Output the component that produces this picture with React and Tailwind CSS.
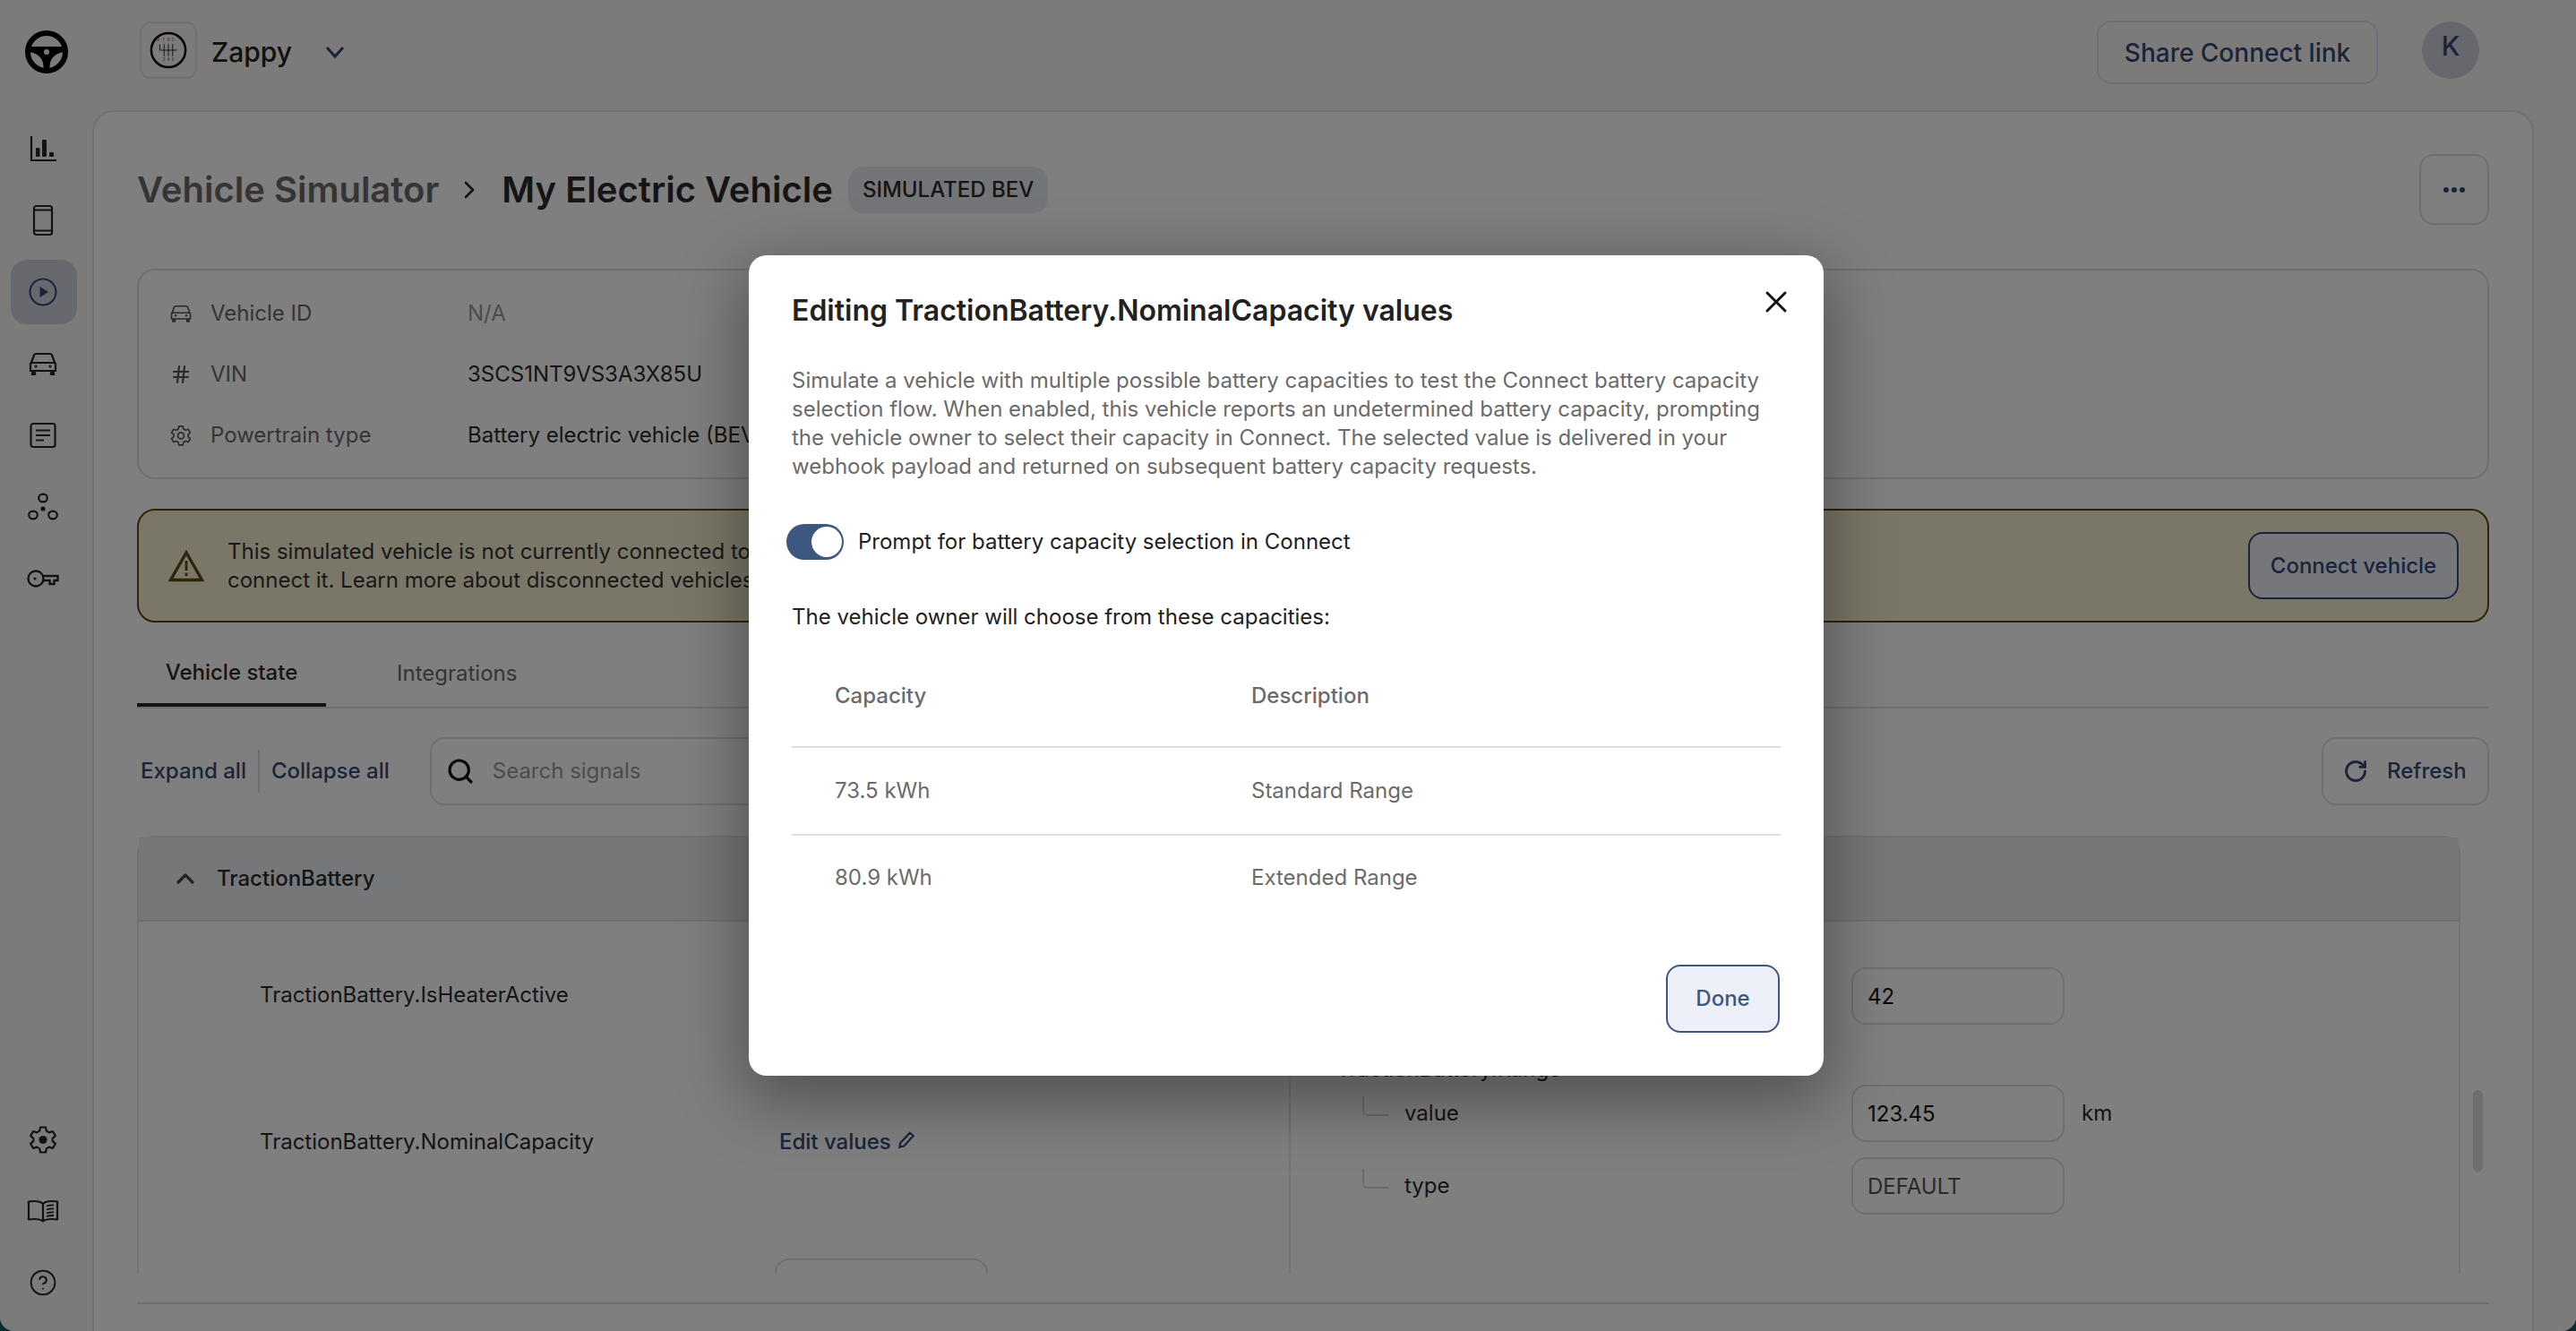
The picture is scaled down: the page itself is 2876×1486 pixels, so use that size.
import React from "react";
import { ChevronRight, ChevronUp, CircleHelp, Hash, RotateCw, Search, X } from "lucide-react";

const navIcon = "w-8 h-8 text-[#262626]";

const Logo = () => (
  <svg viewBox="0 0 48 48" className="w-12 h-12">
    <circle cx="24" cy="24" r="21" fill="none" stroke="#000" strokeWidth="6" />
    <path d="M3 18H45V24C38 24 30 28 28 36L27 45H21L20 36C18 28 10 24 3 24Z" fill="#000" />
    <circle cx="24" cy="24" r="3" fill="#f8f7f2" />
  </svg>
);

const Shifter = () => (
  <svg viewBox="0 0 44 44" className="w-[42px] h-[42px]">
    <circle cx="22" cy="22" r="20" fill="none" stroke="#000" strokeWidth="2.6" />
    <path d="M12 15V22H32M17 15V29M22 15V29M27 15V29" fill="none" stroke="#222" strokeWidth="1" />
    <text x="8.5" y="12" fontSize="4.5" fill="#333" fontFamily="Inter">R</text>
    <text x="15.5" y="12" fontSize="4.5" fill="#333" fontFamily="Inter">1</text>
    <text x="20.5" y="12" fontSize="4.5" fill="#333" fontFamily="Inter">3</text>
    <text x="26" y="12" fontSize="4.5" fill="#333" fontFamily="Inter">5</text>
    <text x="15.5" y="35" fontSize="4.5" fill="#333" fontFamily="Inter">2</text>
    <text x="20.5" y="35" fontSize="4.5" fill="#333" fontFamily="Inter">4</text>
    <text x="26" y="35" fontSize="4.5" fill="#333" fontFamily="Inter">6</text>
  </svg>
);

const ChartIcon = () => (
  <svg viewBox="0 0 32 32" className={navIcon} fill="none" stroke="currentColor" strokeWidth="2.2">
    <path d="M3 2V29H31" />
    <rect x="8" y="15" width="4.5" height="10" rx="1" fill="currentColor" stroke="none" />
    <rect x="15" y="6" width="5" height="19" rx="1" fill="currentColor" stroke="none" />
    <rect x="23" y="20" width="5" height="5" rx="1" fill="currentColor" stroke="none" />
  </svg>
);

const PhoneIcon = () => (
  <svg viewBox="0 0 32 36" className="w-8 h-9 text-[#262626]" fill="none" stroke="currentColor" strokeWidth="2.2">
    <rect x="6" y="2" width="20" height="32" rx="2.5" />
    <path d="M6 6.5H26M6 29.5H26" />
  </svg>
);

const PlayIcon = () => (
  <svg viewBox="0 0 32 32" className="w-8 h-8 text-[#344a78]" fill="none" stroke="currentColor" strokeWidth="2">
    <circle cx="16" cy="16" r="14.5" />
    <path d="M12.5 10L22 16L12.5 22Z" fill="currentColor" stroke="none" />
  </svg>
);

const CarIcon = ({ className }) => (
  <svg viewBox="0 0 32 26" className={className} fill="none" stroke="currentColor" strokeWidth="2.2">
    <path d="M2.5 13L6 3.5C6.4 2.4 7.2 2 8.2 2H23.8C24.8 2 25.6 2.4 26 3.5L29.5 13" />
    <path d="M2 13.5C2 12.5 2.8 12 3.5 12H28.5C29.2 12 30 12.5 30 13.5V21H2Z" />
    <path d="M4 21V25H7V21M25 21V25H28V21" fill="currentColor" />
    <circle cx="8" cy="16" r="1.6" fill="currentColor" stroke="none" />
    <circle cx="24" cy="16" r="1.6" fill="currentColor" stroke="none" />
  </svg>
);

const DocIcon = () => (
  <svg viewBox="0 0 32 32" className={navIcon} fill="none" stroke="currentColor" strokeWidth="2.2">
    <rect x="2.5" y="3" width="27" height="26" rx="2.5" />
    <path d="M8 10.5H24M8 16H24M8 21.5H17" />
  </svg>
);

const NodesIcon = () => (
  <svg viewBox="0 0 34 32" className="w-[34px] h-8 text-[#262626]" fill="none" stroke="currentColor" strokeWidth="2.2">
    <ellipse cx="17" cy="6" rx="4.8" ry="4.4" />
    <ellipse cx="6" cy="25" rx="4.8" ry="4.4" />
    <ellipse cx="28" cy="25" rx="4.8" ry="4.4" />
    <circle cx="17" cy="18" r="2.6" fill="currentColor" stroke="none" />
  </svg>
);

const KeyIcon = () => (
  <svg viewBox="0 0 36 22" className="w-9 h-[22px] text-[#262626]" fill="none" stroke="currentColor" strokeWidth="2.4">
    <circle cx="10" cy="11" r="8.5" />
    <circle cx="9" cy="11" r="1.6" fill="currentColor" stroke="none" />
    <path d="M18.5 8H34.5V13H30.5V17H25.5V13H18.5" />
  </svg>
);

const GearIcon = ({ filled, className }) => (
  <svg viewBox="0 0 32 32" className={className} fill="none" stroke="currentColor" strokeWidth="2.2" strokeLinejoin="round">
    <path d="M13 2.5H19L19.8 6.6L22.9 8.4L26.9 7L29.9 12.1L26.7 14.9V18.1L29.9 20.9L26.9 26L22.9 24.6L19.8 26.4L19 30.5H13L12.2 26.4L9.1 24.6L5.1 26L2.1 20.9L5.3 18.1V14.9L2.1 12.1L5.1 7L9.1 8.4L12.2 6.6Z" />
    <circle cx="16" cy="16.5" r="4.6" fill={filled ? "currentColor" : "none"} stroke={filled ? "none" : "currentColor"} />
  </svg>
);

const BookIcon = () => (
  <svg viewBox="0 0 36 26" className="w-9 h-[26px] text-[#262626]" fill="none" stroke="currentColor" strokeWidth="2.2" strokeLinejoin="round">
    <path d="M18 5C15 2 9 1.5 2 2.5V22.5C9 21.5 15 22 18 24.5C21 22 27 21.5 34 22.5V2.5C27 1.5 21 2 18 5ZM18 5V24.5" />
    <path d="M22 7.5C24.5 6.7 27 6.4 30 6.4M22 11.5C24.5 10.7 27 10.4 30 10.4M22 15.5C24.5 14.7 27 14.4 30 14.4M22 19C24.5 18.2 27 18 30 18" strokeWidth="1.8" />
  </svg>
);

const WarnIcon = () => (
  <svg viewBox="0 0 40 36" className="w-10 h-9 text-[#5f4710]" fill="none" stroke="currentColor" strokeWidth="3.4">
    <path d="M20 3L37.5 33.5H2.5Z" />
    <path d="M20 12V23M20 25.5V29" strokeWidth="2.8" />
  </svg>
);

const PencilIcon = () => (
  <svg viewBox="0 0 20 20" className="w-[22px] h-[22px] text-[#344a78]" fill="none" stroke="currentColor" strokeWidth="2">
    <path d="M3 17L4 12.5L13.5 2.5L17 5.5L7.5 16Z" />
  </svg>
);

const NavItem = ({ active, children }) => (
  <div className={`flex h-[72px] w-[74px] items-center justify-center pr-[2px] ${active ? "rounded-[18px] bg-[#cfd2dc]" : ""}`}>
    {children}
  </div>
);

const Field = ({ value, gray }) => (
  <input
    readOnly
    value={value}
    className={`w-[238px] h-16 shrink-0 rounded-[16px] border-2 border-[#dedede] px-4 text-2xl ${gray ? "text-[#555]" : "text-[#111]"}`}
  />
);

const Connector = () => (
  <div className="ml-[29px] mt-[13px] mr-[17px] h-[22px] w-[30px] shrink-0 self-start rounded-bl-[6px] border-b-2 border-l-2 border-[#d6d6d6]" />
);

const infoRows = [
  { icon: <CarIcon className="w-6 h-6 text-[#555]" />, label: "Vehicle ID", value: "N/A", valueCls: "text-[#999]" },
  { icon: <Hash className="w-6 h-6 text-[#555]" strokeWidth={2.2} />, label: "VIN", value: "3SCS1NT9VS3A3X85U", valueCls: "text-[#2b2b2b]" },
  { icon: <GearIcon className="w-6 h-6 text-[#555]" />, label: "Powertrain type", value: "Battery electric vehicle (BEV)", valueCls: "text-[#2b2b2b]" },
];

export default function App() {
  return (
    <div className="relative h-screen overflow-hidden bg-[#0b2a2e] font-['Inter',sans-serif] text-[#2b2b2b]">
      <div className="flex h-full overflow-hidden rounded-b-[16px] bg-[#f8f7f2]">
        {/* sidebar */}
        <aside className="flex w-[103px] shrink-0 flex-col pl-3 pb-[18px]">
          <div className="flex h-[130px] items-start pl-4 pt-[34px]">
            <Logo />
          </div>
          <nav className="flex flex-col gap-2">
            <NavItem><ChartIcon /></NavItem>
            <NavItem><PhoneIcon /></NavItem>
            <NavItem active><PlayIcon /></NavItem>
            <NavItem><CarIcon className="w-8 h-[26px] text-[#262626]" /></NavItem>
            <NavItem><DocIcon /></NavItem>
            <NavItem><NodesIcon /></NavItem>
            <NavItem><KeyIcon /></NavItem>
          </nav>
          <div className="mt-auto flex flex-col gap-2">
            <NavItem><GearIcon filled className="w-8 h-8 text-[#262626]" /></NavItem>
            <NavItem><BookIcon /></NavItem>
            <NavItem><CircleHelp className="w-8 h-8 text-[#262626]" strokeWidth={1.5} /></NavItem>
          </div>
        </aside>

        <main className="flex min-w-0 flex-1 flex-col pr-[47px]">
          {/* top bar */}
          <header className="flex h-[123px] shrink-0 pt-6">
            <div className="ml-[53px] flex h-16 w-16 items-center justify-center rounded-[12px] border-2 border-[#dfe0e8]">
              <Shifter />
            </div>
            <span className="ml-4 flex h-[68px] items-center text-[30px] font-medium text-[#222]">Zappy</span>
            <svg viewBox="0 0 22 14" className="ml-[37px] mt-[27px] h-[14px] w-[22px] text-[#344a78]" fill="none" stroke="currentColor" strokeWidth="3.2">
              <path d="M2 2L11 12L20 2" />
            </svg>
            <button className="ml-auto h-[71px] w-[314px] -translate-y-px rounded-[16px] border-2 border-[#dde0ee] text-[28px] font-medium text-[#344a78]">
              Share Connect link
            </button>
            <div className="ml-[49px] mr-[61px] h-16 w-16 rounded-full bg-[#ccd0dc] pt-[5px] text-center text-[30px] font-medium text-[#344a78]">K</div>
          </header>

          {/* panel */}
          <section className="min-h-0 flex-1 rounded-t-[24px] border-2 border-b-0 border-[#e2e2e2] bg-white px-12 pt-[47px]">
            <div className="flex h-[79px] items-center">
              <h1 className="text-[40px] font-semibold text-[#6a6a6a]">Vehicle Simulator</h1>
              <ChevronRight className="ml-[18px] mr-[20px] h-8 w-8 text-[#2b2b2b]" strokeWidth={2} />
              <h1 className="text-[40px] font-semibold text-[#2b2b2b]">My Electric Vehicle</h1>
              <span className="ml-[17px] rounded-[16px] bg-[#e9ebf0] px-4 py-[10px] text-2xl font-medium text-[#2b2b2b]">SIMULATED BEV</span>
              <button className="ml-auto flex h-[79px] w-[78px] items-center justify-center rounded-[16px] border-2 border-[#dedede]">
                <span className="flex gap-[3px]">
                  <i className="h-[6px] w-[6px] rounded-full bg-[#344a78]" />
                  <i className="h-[6px] w-[6px] rounded-full bg-[#344a78]" />
                  <i className="h-[6px] w-[6px] rounded-full bg-[#344a78]" />
                </span>
              </button>
            </div>

            {/* vehicle info */}
            <div className="mt-[49px] flex h-[235px] flex-col gap-9 rounded-[20px] border-2 border-[#dedede] pl-[35px] pt-[32px] text-2xl">
              {infoRows.map((row) => (
                <div key={row.label} className="flex h-8 items-center">
                  {row.icon}
                  <span className="ml-[21px] w-[287px] text-[#6a6a6a]">{row.label}</span>
                  <span className={row.valueCls}>{row.value}</span>
                </div>
              ))}
            </div>

            {/* warning */}
            <div className="mt-[33px] flex h-[127px] items-center rounded-[20px] border-2 border-[#5f4710] bg-[#f6eed0] pl-[33px] pr-8">
              <WarnIcon />
              <p className="ml-[26px] text-2xl text-[#333]">
                This simulated vehicle is not currently connected to
                <br />
                connect it. Learn more about disconnected vehicles
              </p>
              <button className="ml-auto h-[75px] w-[235px] rounded-[16px] border-2 border-[#344a78] bg-[#eceef6] text-2xl font-medium text-[#344a78]">
                Connect vehicle
              </button>
            </div>

            {/* tabs */}
            <div className="mt-[18px] flex border-b-2 border-[#dedede] text-2xl">
              <div className="flex h-[76px] w-[211px] items-center justify-center border-b-4 border-[#2b2b2b] pt-1 font-medium text-[#2b2b2b]">Vehicle state</div>
              <div className="ml-[79px] flex h-[76px] items-center pt-[2px] text-[#6a6a6a]">Integrations</div>
            </div>

            {/* toolbar */}
            <div className="mt-8 flex h-[76px] items-center text-2xl">
              <span className="ml-1 font-medium text-[#344a78]">Expand all</span>
              <span className="mx-[13px] h-12 w-[2px] bg-[#dedede]" />
              <span className="font-medium text-[#344a78]">Collapse all</span>
              <div className="ml-[45px] flex h-[76px] w-[900px] items-center rounded-[16px] border-2 border-[#dedede] pl-4">
                <Search className="h-8 w-8 text-[#111]" strokeWidth={2.4} />
                <input placeholder="Search signals" className="ml-5 flex-1 outline-none placeholder:text-[#999]" />
              </div>
              <button className="ml-auto flex h-[76px] w-[187px] items-center rounded-[16px] border-2 border-[#dedede] pl-[22px] font-medium text-[#344a78]">
                <RotateCw className="h-7 w-7" strokeWidth={2.4} />
                <span className="ml-[21px]">Refresh</span>
              </button>
            </div>

            {/* signals */}
            <div className="relative mt-[34px] h-[489px] overflow-hidden pr-8">
              <div className="rounded-t-[20px] border-2 border-[#e4e4e4]">
                <div className="flex h-[94px] items-center border-b-2 border-[#dedede] bg-[#eceef2] pl-9 text-2xl font-medium text-[#2b2b2b]">
                  <ChevronUp className="h-8 w-8 text-[#444]" strokeWidth={2.4} />
                  <span className="ml-[19px]">TractionBattery</span>
                </div>
                <div className="flex text-2xl">
                  <div className="w-[1284px] shrink-0 text-[#2b2b2b]">
                    <div className="flex h-[164px] items-center pl-[135px]">TractionBattery.IsHeaterActive</div>
                    <div className="flex h-[164px] items-center pl-[135px]">
                      <span className="w-[580px]">TractionBattery.NominalCapacity</span>
                      <span className="font-medium text-[#344a78]">Edit values</span>
                      <span className="ml-[6px] -translate-y-[2px]"><PencilIcon /></span>
                    </div>
                    <div className="ml-[710px] mt-[48px] h-16 w-[238px] rounded-[16px] border-2 border-[#dedede]" />
                  </div>
                  <div className="h-[500px] flex-1 border-l-2 border-[#e4e4e4] pl-[51px] pt-[51px]">
                    <div className="ml-[575px]"><Field value="42" /></div>
                    <div className="mt-[34px] h-8 leading-8">TractionBattery.Range</div>
                    <div className="mt-px flex">
                      <Connector />
                      <span className="flex h-16 w-[499px] items-center">value</span>
                      <Field value="123.45" />
                      <span className="ml-[19px] flex h-16 items-center">km</span>
                    </div>
                    <div className="mt-[17px] flex">
                      <Connector />
                      <span className="flex h-16 w-[499px] items-center">type</span>
                      <Field value="DEFAULT" gray />
                    </div>
                  </div>
                </div>
              </div>
              <div className="absolute right-[7px] top-[284px] h-[91px] w-[11px] rounded-full bg-[#dcdcdc]" />
            </div>
            <div className="mt-8 border-t-2 border-[#dedede]" />
          </section>
        </main>
      </div>

      {/* dialog */}
      <div className="absolute inset-0 flex items-center justify-center rounded-b-[16px] bg-black/50 pr-1">
        <div className="relative h-[916px] w-[1200px] rounded-[20px] bg-white px-12 pt-[43px] shadow-[0_22px_70px_8px_rgba(0,0,0,0.35)]">
          <X className="absolute right-[33px] top-[32px] h-10 w-10 text-[#111]" strokeWidth={1.8} />
          <h2 className="text-[32px] leading-[38px] font-semibold text-[#222]">Editing TractionBattery.NominalCapacity values</h2>
          <p className="mt-[43px] text-2xl text-[#6b6b6b]">
            Simulate a vehicle with multiple possible battery capacities to test the Connect battery capacity
            <br />
            selection flow. When enabled, this vehicle reports an undetermined battery capacity, prompting
            <br />
            the vehicle owner to select their capacity in Connect. The selected value is delivered in your
            <br />
            webhook payload and returned on subsequent battery capacity requests.
          </p>
          <div className="mt-[48px] flex h-10 items-center">
            <div className="-ml-[6px] flex h-10 w-16 items-center justify-end rounded-full bg-[#3e5780] pr-[2px]">
              <div className="h-[34px] w-[34px] rounded-full bg-white" />
            </div>
            <span className="ml-4 text-2xl text-[#222]">Prompt for battery capacity selection in Connect</span>
          </div>
          <p className="mt-[48px] text-2xl text-[#222]">The vehicle owner will choose from these capacities:</p>
          <table className="mt-[23px] w-full table-fixed text-left text-2xl text-[#6b6b6b]">
            <thead>
              <tr className="h-[106px] border-b-2 border-[#e0e0e0]">
                <th className="w-[513px] pb-2 pl-12 font-medium">Capacity</th>
                <th className="pb-2 pl-0 font-medium">Description</th>
              </tr>
            </thead>
            <tbody>
              <tr className="h-[98px] border-b-2 border-[#e0e0e0]">
                <td className="pl-12">73.5 kWh</td>
                <td>Standard Range</td>
              </tr>
              <tr className="h-[98px]">
                <td className="pb-1 pl-12">80.9 kWh</td>
                <td className="pb-1">Extended Range</td>
              </tr>
            </tbody>
          </table>
          <div className="absolute bottom-[48px] right-[49px]">
            <button className="h-[76px] w-[127px] rounded-[16px] border-2 border-[#3e5780] bg-[#eef0f9] text-2xl font-medium text-[#3e5780]">Done</button>
          </div>
        </div>
      </div>
    </div>
  );
}
